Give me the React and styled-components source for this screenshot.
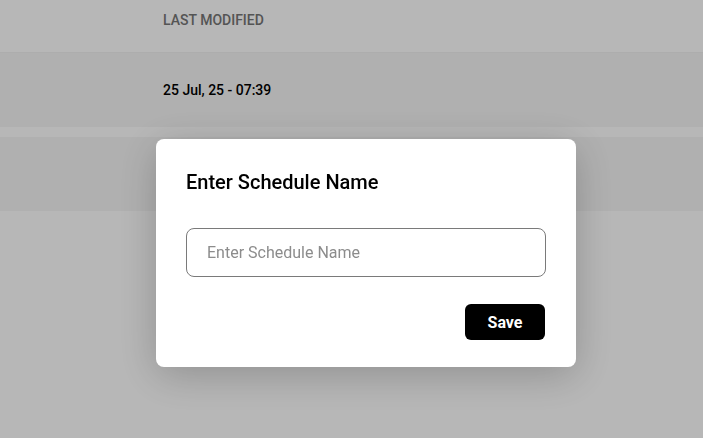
import React from "react"
import styled, { createGlobalStyle } from "styled-components"

const GlobalStyle = createGlobalStyle`
    body {
        margin: 0;
        font-family: Roboto, "Liberation Sans", sans-serif;
        background: #ffffff;
    }
`

const Page = styled.div`
    width: 100%;
    height: 438px;
    background: #ffffff;
`

const TableHead = styled.div`
    display: grid;
    grid-template-columns: 163px 1fr;
    align-items: start;
    box-sizing: border-box;
    height: 53px;
    padding-top: 12px;
    border-bottom: 1px solid #f2f2f2;
    background: #ffffff;
`

const HeadCell = styled.div`
    grid-column: 2;
    font-size: 14px;
    line-height: 16px;
    font-weight: 500;
    color: #767676;
`

const Rows = styled.div`
    display: flex;
    flex-direction: column;
    gap: 10px;
`

const Row = styled.div`
    display: grid;
    grid-template-columns: 163px 1fr;
    align-items: center;
    height: 74px;
    background: #f6f6f6;
`

const Cell = styled.div`
    grid-column: 2;
    font-size: 14px;
    font-weight: 500;
    color: #000000;
`

const Overlay = styled.div`
    position: fixed;
    inset: 0;
    background: rgba(0, 0, 0, 0.282);
    display: flex;
    align-items: flex-start;
    padding: 139px 0 0 156px;
`

const Modal = styled.div`
    width: 420px;
    height: 228px;
    box-sizing: border-box;
    background: #ffffff;
    border-radius: 8px;
    padding: 30px 30px 27px;
    display: flex;
    flex-direction: column;
    box-shadow: 0 8px 40px rgba(0, 0, 0, 0.22);
`

const Title = styled.h2`
    margin: 0;
    font-size: 20px;
    font-weight: 500;
    color: #000000;
    line-height: 26px;
`

const Input = styled.input`
    margin-top: 33px;
    height: 49px;
    box-sizing: border-box;
    border: 1px solid #7a7a7a;
    border-radius: 8px;
    padding: 0 20px;
    font-family: Roboto, "Liberation Sans", sans-serif;
    font-size: 16px;
    outline: none;
    &::placeholder {
        color: #8c8c8c;
    }
`

const Actions = styled.div`
    display: flex;
    justify-content: flex-end;
    margin-top: 27px;
    padding-right: 1px;
`

const SaveButton = styled.button`
    width: 80px;
    height: 36px;
    border: none;
    border-radius: 6px;
    background: #000000;
    color: #ffffff;
    font-family: Roboto, "Liberation Sans", sans-serif;
    font-size: 16px;
    font-weight: 700;
    cursor: pointer;
`

const App = () => {
    return (
        <Page>
            <GlobalStyle/>
            <TableHead>
                <HeadCell>LAST MODIFIED</HeadCell>
            </TableHead>
            <Rows>
                <Row>
                    <Cell>25 Jul, 25 - 07:39</Cell>
                </Row>
                <Row>
                    <Cell></Cell>
                </Row>
            </Rows>
            <Overlay>
                <Modal>
                    <Title>Enter Schedule Name</Title>
                    <Input placeholder="Enter Schedule Name"/>
                    <Actions>
                        <SaveButton>Save</SaveButton>
                    </Actions>
                </Modal>
            </Overlay>
        </Page>
    )
}

export default App
